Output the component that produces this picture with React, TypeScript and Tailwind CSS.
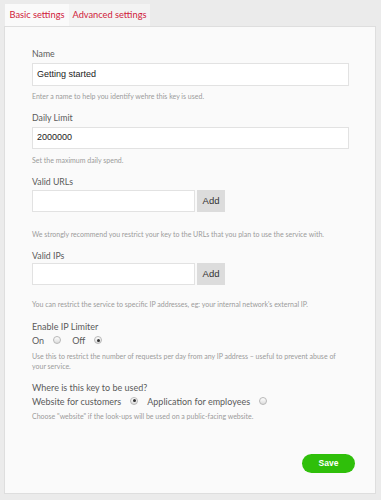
import React from "react";

function Radio({ checked }: { checked?: boolean }) {
  return (
    <span className="inline-flex w-[8px] h-[8px] rounded-full border border-[#b8b8b8] bg-gradient-to-b from-[#ffffff] to-[#dcdcdc] items-center justify-center shrink-0">
      {checked ? <span className="block w-[3px] h-[3px] rounded-full bg-[#333]" /> : null}
    </span>
  );
}

function Help({ children, className = "" }: { children: React.ReactNode; className?: string }) {
  return (
    <p className={"text-[7px] leading-[10px] text-[#9a9a9a] font-['Lato',sans-serif] " + className}>
      {children}
    </p>
  );
}

export default function App() {
  return (
    <div className="w-[381px] h-[500px] bg-[#ebebeb] pt-1 pl-1 font-['Lato',sans-serif] overflow-hidden">
      <div className="flex ml-px">
        <div className="h-[22px] px-[4.5px] flex items-center bg-[#fafafa] text-[9.25px] text-[#d0213a]">
          Basic settings
        </div>
        <div className="h-[22px] px-[3.5px] flex items-center bg-[#f3f3f3] text-[9.25px] text-[#d0213a]">
          Advanced settings
        </div>
      </div>
      <div className="w-[372px] h-[468px] border border-[#dedede] bg-[#fafafa] pl-[27px] pt-[20px]">
        <div className="w-[317px]">
          <div className="text-[8.75px] leading-[14px] text-[#5a5a5a]">Name</div>
          <div className="mt-[2px] h-[23px] bg-white border border-[#e2e2e2] flex items-center pl-[4px] font-['Liberation_Sans',sans-serif] text-[9px] text-[#222]">
            Getting started
          </div>
          <Help className="mt-[5px]">Enter a name to help you identify wehre this key is used.</Help>

          <div className="mt-[10px] text-[8.75px] leading-[14px] text-[#5a5a5a]">Daily Limit</div>
          <div className="mt-[2px] h-[22px] bg-white border border-[#e2e2e2] flex items-center pl-[4px] font-['Liberation_Sans',sans-serif] text-[9px] text-[#222]">
            2000000
          </div>
          <Help className="mt-[6px]">Set the maximum daily spend.</Help>

          <div className="mt-[10px] text-[8.75px] leading-[14px] text-[#5a5a5a]">Valid URLs</div>
          <div className="mt-[1px] flex gap-[2px]">
            <div className="w-[163px] h-[22px] bg-white border border-[#e2e2e2]" />
            <div className="w-[28px] h-[22px] bg-[#dcdcdc] flex items-center justify-center font-['Liberation_Sans',sans-serif] text-[9.5px] text-[#333]">
              Add
            </div>
          </div>
          <Help className="mt-[17px]">
            We strongly recommend you restrict your key to the URLs that you plan to use the service with.
          </Help>

          <div className="mt-[10px] text-[8.75px] leading-[14px] text-[#5a5a5a]">Valid IPs</div>
          <div className="flex gap-[2px]">
            <div className="w-[163px] h-[22px] bg-white border border-[#e2e2e2]" />
            <div className="w-[28px] h-[22px] bg-[#dcdcdc] flex items-center justify-center font-['Liberation_Sans',sans-serif] text-[9.5px] text-[#333]">
              Add
            </div>
          </div>
          <Help className="mt-[14px]">
            You can restrict the service to specific IP addresses, eg: your internal network's external IP.
          </Help>

          <div className="mt-[11px] text-[9px] leading-[14px] text-[#5a5a5a]">Enable IP Limiter</div>
          <div className="h-[14px] flex items-center text-[9px] text-[#5a5a5a]">
            <span>On</span>
            <span className="ml-[9px] -mt-[2px] flex"><Radio /></span>
            <span className="ml-[11px]">Off</span>
            <span className="ml-[9px] -mt-[2px] flex"><Radio checked /></span>
          </div>
          <Help className="mt-[3px]">
            Use this to restrict the number of requests per day from any IP address – useful to prevent abuse of your service.
          </Help>

          <div className="mt-[10px] text-[9px] leading-[14px] text-[#5a5a5a]">Where is this key to be used?</div>
          <div className="h-[14px] flex items-center text-[9px] text-[#5a5a5a]">
            <span>Website for customers</span>
            <span className="ml-[9px] -mt-[3px] flex"><Radio checked /></span>
            <span className="ml-[9px]">Application for employees</span>
            <span className="ml-[9px] -mt-[3px] flex"><Radio /></span>
          </div>
          <Help className="mt-[2px]">Choose "website" if the look-ups will be used on a public-facing website.</Help>

          <div className="mt-[33px] w-[323px] flex justify-end">
            <div className="w-[53px] h-[19px] rounded-full bg-[#2fbf0a] flex items-center justify-center font-['Liberation_Sans',sans-serif] font-bold text-[8.5px] text-white">
              Save
            </div>
          </div>
        </div>
      </div>
    </div>
  );
}
